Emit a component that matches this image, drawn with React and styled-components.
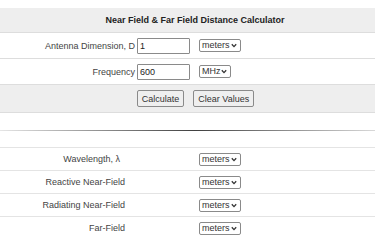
import React, { useState } from "react";
import styled, { createGlobalStyle } from "styled-components";

const GlobalStyle = createGlobalStyle`
  html, body {
    margin: 0;
    padding: 0;
    background: #ffffff;
    overflow: hidden;
  }
  body {
    font-family: "Liberation Sans", Arial, sans-serif;
    color: #333;
  }
`;

const Page = styled.div`
  width: 390px;
  padding-top: 8px;
`;

const Header = styled.div`
  height: 24px;
  display: flex;
  align-items: center;
  justify-content: center;
  background-color: #eeeeee;
  border-bottom: 1px solid #dddddd;
  font-size: 9px;
  font-weight: bold;
  color: #222;
`;

const InputRow = styled.div`
  display: grid;
  grid-template-columns: 137px 62px 1fr;
  align-items: center;
  height: 25px;
  border-bottom: 1px solid #dddddd;
  font-size: 9px;
`;

const Label = styled.label`
  text-align: right;
  padding-right: ${(p) => p.$pad || 2}px;
  color: #444;
  white-space: nowrap;
`;

const TextInput = styled.input`
  box-sizing: border-box;
  width: 53px;
  height: 16px;
  padding: 0 2px;
  border: 1px solid #8a8a8a;
  border-radius: 1px;
  font-family: "Liberation Sans", Arial, sans-serif;
  font-size: 9px;
  color: #222;
  background: #fff;
  outline: none;
`;

const SelectWrap = styled.span`
  position: relative;
  display: inline-block;
  width: ${(p) => p.$width}px;
  height: 13px;
`;

const Select = styled.select`
  box-sizing: border-box;
  appearance: none;
  -webkit-appearance: none;
  width: 100%;
  height: 100%;
  margin: 0;
  padding: 0 0 0 2px;
  border: 1px solid #8a8a8a;
  border-radius: 2px;
  background: #fff;
  font-family: "Liberation Sans", Arial, sans-serif;
  font-size: 9px;
  line-height: 11px;
  color: #333;
  outline: none;
`;

const Chevron = styled.svg`
  position: absolute;
  right: 4px;
  top: 4px;
  width: 6px;
  height: 5px;
  pointer-events: none;
`;

const ButtonRow = styled.div`
  display: flex;
  justify-content: center;
  align-items: center;
  gap: 9px;
  height: 27px;
  background-color: #eeeeee;
  border-bottom: 1px solid #dddddd;
  padding-left: 1px;
`;

const Button = styled.button`
  box-sizing: border-box;
  height: 17px;
  padding: 0 4px;
  border: 1px solid #8a8a8a;
  border-radius: 2px;
  background: #efefef;
  font-family: "Liberation Sans", Arial, sans-serif;
  font-size: 9px;
  color: #333;
  cursor: pointer;
`;

const Divider = styled.div`
  height: 34px;
  display: flex;
  align-items: center;
  border-bottom: 1px solid #e4e4e4;
`;

const Rule = styled.hr`
  width: 100%;
  height: 1px;
  margin: 0;
  margin-top: 1px;
  border: none;
  background: linear-gradient(
    to right,
    rgba(0, 0, 0, 0.1),
    rgba(0, 0, 0, 0.75) 50%,
    rgba(0, 0, 0, 0.1)
  );
`;

const ResultRow = styled.div`
  display: grid;
  grid-template-columns: 127px 72px 1fr;
  align-items: center;
  height: 22px;
  border-bottom: ${(p) => (p.$last ? "none" : "1px solid #e4e4e4")};
  font-size: 9px;
`;

const Value = styled.span``;

const UnitSelect = ({ width, options, value }) => (
  <SelectWrap $width={width}>
    <Select defaultValue={value}>
      {options.map((o) => (
        <option key={o}>{o}</option>
      ))}
    </Select>
    <Chevron viewBox="0 0 6 5">
      <path d="M0.8 1.2 L3 3.6 L5.2 1.2" fill="none" stroke="#333" strokeWidth="1.3" />
    </Chevron>
  </SelectWrap>
);

const lengthUnits = ["meters", "cm", "mm", "feet", "inches"];
const freqUnits = ["Hz", "kHz", "MHz", "GHz"];

const results = [
  { label: "Wavelength, \u03bb", pad: 7 },
  { label: "Reactive Near-Field" },
  { label: "Radiating Near-Field" },
  { label: "Far-Field" },
];

export default function App() {
  const [dim, setDim] = useState("1");
  const [freq, setFreq] = useState("600");

  return (
    <Page>
      <GlobalStyle />
      <Header>Near Field &amp; Far Field Distance Calculator</Header>
      <InputRow>
        <Label>Antenna Dimension, D</Label>
        <TextInput value={dim} onChange={(e) => setDim(e.target.value)} />
        <UnitSelect width={42} options={lengthUnits} value="meters" />
      </InputRow>
      <InputRow>
        <Label>Frequency</Label>
        <TextInput value={freq} onChange={(e) => setFreq(e.target.value)} />
        <UnitSelect width={32} options={freqUnits} value="MHz" />
      </InputRow>
      <ButtonRow>
        <Button>Calculate</Button>
        <Button
          onClick={() => {
            setDim("");
            setFreq("");
          }}
        >
          Clear Values
        </Button>
      </ButtonRow>
      <Divider>
        <Rule />
      </Divider>
      {results.map((r, i) => (
        <ResultRow key={r.label} $last={i === results.length - 1}>
          <Label $pad={r.pad || 0}>{r.label}</Label>
          <Value />
          <div>
            <UnitSelect width={42} options={lengthUnits} value="meters" />
          </div>
        </ResultRow>
      ))}
    </Page>
  );
}
